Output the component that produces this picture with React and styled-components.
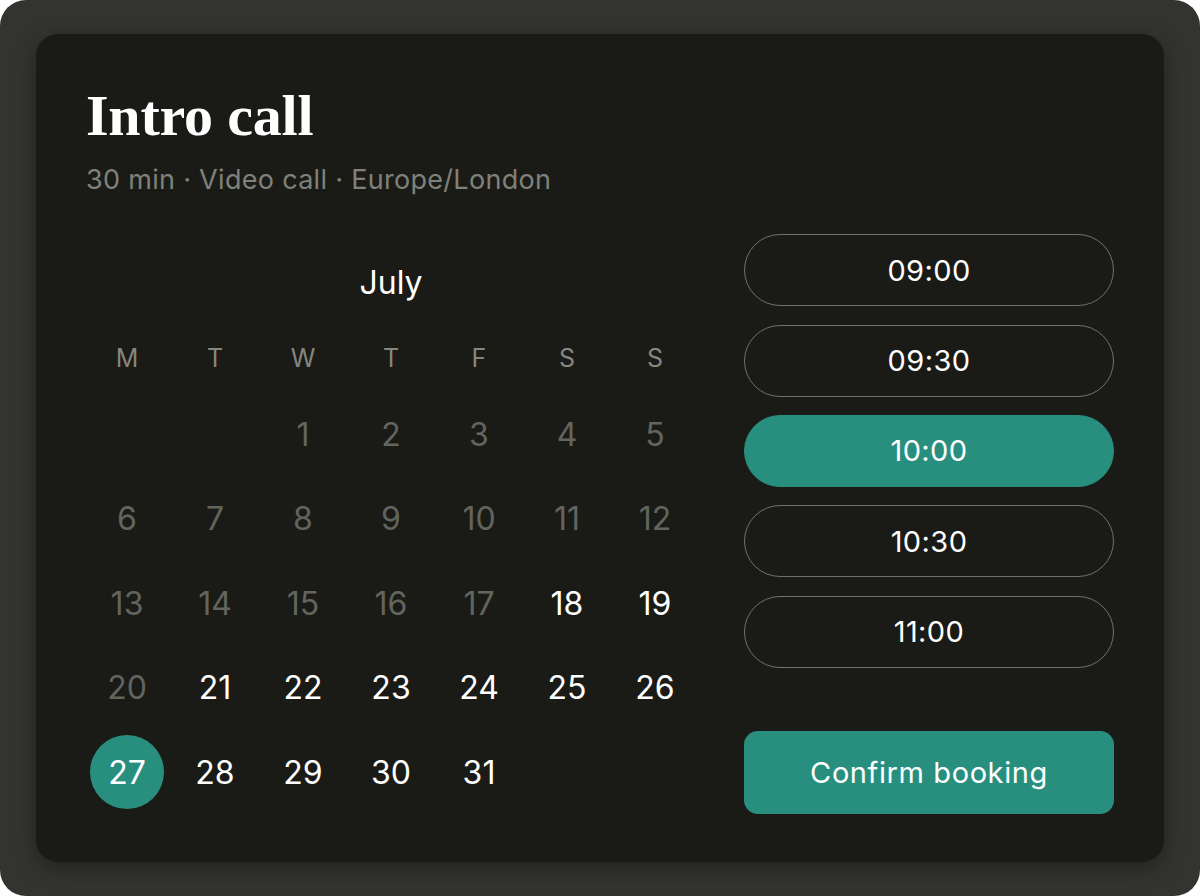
import React from "react";
import styled, { createGlobalStyle } from "styled-components";

const GlobalStyle = createGlobalStyle`
  html, body {
    margin: 0;
    padding: 0;
    background: #ffffff;
  }
  * {
    box-sizing: border-box;
  }
`;

const Frame = styled.div`
  width: 1200px;
  height: 896px;
  border-radius: 26px;
  background: #33342f;
  padding: 34px 36px;
  font-family: Inter, "Noto Sans", sans-serif;
`;

const Card = styled.div`
  height: 828px;
  border-radius: 22px;
  background: #1a1b16;
  box-shadow: 0 6px 22px rgba(0, 0, 0, 0.35);
  padding: 53px 50px 0 50px;
`;

const Title = styled.h1`
  margin: 0;
  font-family: "Liberation Serif", "DejaVu Serif", serif;
  font-weight: 700;
  font-size: 58px;
  line-height: 1;
  color: #ffffff;
  letter-spacing: -0.2px;
`;

const Meta = styled.div`
  margin-top: 19px;
  font-size: 27px;
  line-height: 1.2;
  letter-spacing: 0.3px;
  color: #7f817b;
`;

const Body = styled.div`
  display: grid;
  grid-template-columns: 616px 370px;
  column-gap: 45px;
  margin-top: 38px;
  margin-left: -3px;
`;

const Calendar = styled.div`
  padding-top: 30px;
`;

const Month = styled.div`
  text-align: center;
  font-size: 32px;
  line-height: 38px;
  color: #ffffff;
`;

const WeekRow = styled.div`
  display: grid;
  grid-template-columns: repeat(7, 88px);
  margin-top: 36px;
  margin-bottom: 19px;
`;

const WeekDay = styled.div`
  height: 40px;
  display: flex;
  align-items: center;
  justify-content: center;
  font-size: 25px;
  color: #85877f;
`;

const DayGrid = styled.div`
  display: grid;
  grid-template-columns: repeat(7, 88px);
  grid-auto-rows: 74px;
  row-gap: 10.5px;
`;

const Day = styled.div`
  display: flex;
  align-items: center;
  justify-content: center;
`;

const DayNum = styled.span`
  width: 74px;
  height: 74px;
  border-radius: 50%;
  display: flex;
  align-items: center;
  justify-content: center;
  font-size: 32px;
  color: ${(p) => (p.$past ? "#62645e" : "#ffffff")};
  background: ${(p) => (p.$selected ? "#288f7f" : "transparent")};
`;

const Slots = styled.div`
  display: flex;
  flex-direction: column;
  gap: 18.3px;
`;

const Slot = styled.button`
  height: 72px;
  border-radius: 36px;
  border: 1.5px solid ${(p) => (p.$active ? "#288f7f" : "#6f716a")};
  background: ${(p) => (p.$active ? "#288f7f" : "transparent")};
  color: #ffffff;
  font-family: Inter, "Noto Sans", sans-serif;
  font-size: 29px;
  letter-spacing: 0.4px;
  cursor: pointer;
`;

const Confirm = styled.button`
  margin-top: 45px;
  height: 83px;
  border: none;
  border-radius: 14px;
  background: #288f7f;
  color: #ffffff;
  font-family: Inter, "Noto Sans", sans-serif;
  font-size: 29px;
  letter-spacing: 0.6px;
  cursor: pointer;
`;

const weekdays = ["M", "T", "W", "T", "F", "S", "S"];
const times = ["09:00", "09:30", "10:00", "10:30", "11:00"];

export default function App() {
  const cells = [null, null];
  for (let d = 1; d <= 31; d++) cells.push(d);

  return (
    <>
      <GlobalStyle />
      <Frame>
        <Card>
          <Title>Intro call</Title>
          <Meta>30 min · Video call · Europe/London</Meta>
          <Body>
            <Calendar>
              <Month>July</Month>
              <WeekRow>
                {weekdays.map((w, i) => (
                  <WeekDay key={i}>{w}</WeekDay>
                ))}
              </WeekRow>
              <DayGrid>
                {cells.map((d, i) => (
                  <Day key={i}>
                    {d && (
                      <DayNum $past={d < 18 || d === 20} $selected={d === 27}>
                        {d}
                      </DayNum>
                    )}
                  </Day>
                ))}
              </DayGrid>
            </Calendar>
            <Slots>
              {times.map((t) => (
                <Slot key={t} $active={t === "10:00"}>
                  {t}
                </Slot>
              ))}
              <Confirm>Confirm booking</Confirm>
            </Slots>
          </Body>
        </Card>
      </Frame>
    </>
  );
}
